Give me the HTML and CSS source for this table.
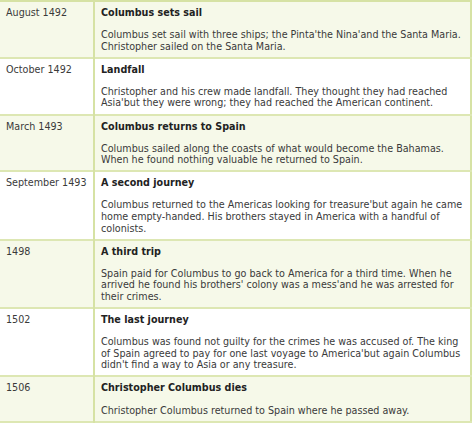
FILE: index.html
```html
<!DOCTYPE html>
<html>
<head>
<meta charset="utf-8">
<link rel="stylesheet" href="styles.css">
</head>
<body>
<table class="timeline">
  <tr class="alt">
    <td class="date">August 1492</td>
    <td class="event"><h3>Columbus sets sail</h3><p>Columbus set sail with three ships; the Pinta'the Nina'and the Santa Maria. Christopher sailed on the Santa Maria.</p></td>
  </tr>
  <tr>
    <td class="date">October 1492</td>
    <td class="event"><h3>Landfall</h3><p>Christopher and his crew made landfall. They thought they had reached Asia'but they were wrong; they had reached the American continent.</p></td>
  </tr>
  <tr class="alt">
    <td class="date">March 1493</td>
    <td class="event"><h3>Columbus returns to Spain</h3><p>Columbus sailed along the coasts of what would become the Bahamas. When he found nothing valuable he returned to Spain.</p></td>
  </tr>
  <tr>
    <td class="date">September 1493</td>
    <td class="event"><h3>A second journey</h3><p>Columbus returned to the Americas looking for treasure'but again he came home empty-handed. His brothers stayed in America with a handful of colonists.</p></td>
  </tr>
  <tr class="alt">
    <td class="date">1498</td>
    <td class="event"><h3>A third trip</h3><p>Spain paid for Columbus to go back to America for a third time. When he arrived he found his brothers' colony was a mess'and he was arrested for their crimes.</p></td>
  </tr>
  <tr>
    <td class="date">1502</td>
    <td class="event"><h3>The last journey</h3><p>Columbus was found not guilty for the crimes he was accused of. The king of Spain agreed to pay for one last voyage to America'but again Columbus didn't find a way to Asia or any treasure.</p></td>
  </tr>
  <tr class="alt">
    <td class="date">1506</td>
    <td class="event"><h3>Christopher Columbus dies</h3><p>Christopher Columbus returned to Spain where he passed away.</p></td>
  </tr>
</table>
</body>
</html>
```

FILE: styles.css
```css
html, body {
  margin: 0;
  padding: 0;
  background: #ffffff;
}
body {
  font-family: "DejaVu Sans", Verdana, sans-serif;
  font-size: 9.6px;
  line-height: 11.6px;
  color: #3a3a3a;
}
.timeline {
  border-collapse: collapse;
  width: 472px;
  border-top: 2px solid #d6e2a4;
  border-right: 2px solid #d6e2a4;
  border-bottom: 2px solid #d6e2a4;
}
.timeline tr {
  border-bottom: 2px solid #dde7b3;
}
.timeline tr.alt {
  background: #f6f9e9;
}
.timeline td {
  vertical-align: top;
  padding: 5px 6px 4.5px 6px;
}
.timeline .date {
  width: 81px;
  border-right: 2px solid #d6e2a4;
}
.timeline h3 {
  margin: 0 0 10.5px 0;
  font-size: 9.6px;
  line-height: 11.6px;
  font-weight: bold;
  color: #222;
}
.timeline p {
  margin: 0;
}
```
